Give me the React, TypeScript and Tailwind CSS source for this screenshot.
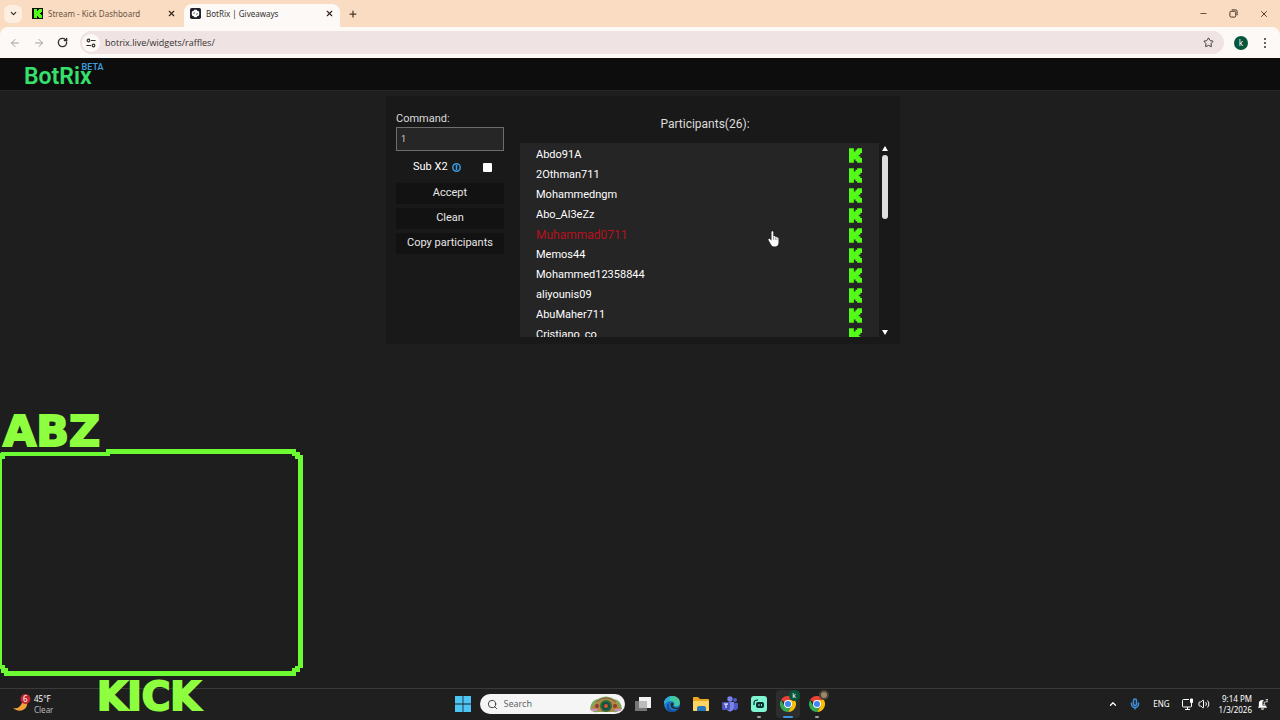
import { ChevronDown, X, Plus, ArrowLeft, ArrowRight, RotateCw, Star, Minus, Search, ChevronUp, Mic, Volume2 } from "lucide-react";
import type { ReactNode } from "react";

const participants = [
  "Abdo91A",
  "2Othman711",
  "Mohammedngm",
  "Abo_Al3eZz",
  "Muhammad0711",
  "Memos44",
  "Mohammed12358844",
  "aliyounis09",
  "AbuMaher711",
  "Cristiano_co",
];

const WINNER = "Muhammad0711";

function KickMark({ className }: { className?: string }) {
  return (
    <svg viewBox="0 0 8 9" className={className} fill="#53fc18" aria-hidden="true">
      <path d="M0 0h3v2h1V1h1V0h3v3H7v1H6v1h1v1h1v3H5V8H4V7H3v2H0z" />
    </svg>
  );
}

function BotrixMark({ className }: { className?: string }) {
  return (
    <svg viewBox="0 0 20 20" className={className} aria-hidden="true">
      <rect width="20" height="20" rx="3" fill="#20202c" />
      <path d="M8 3h4l1 2 3 1 1 4-1 4-3 1-1 2H8l-1-2-3-1-1-4 1-4 3-1z" fill="#fff" />
      <path d="M7 11V9l2-2M13 9v2l-2 2" fill="none" stroke="#20202c" strokeWidth="1.200" />
    </svg>
  );
}

function ChromeMark() {
  return (
    <svg viewBox="0 0 24 24" className="size-4" aria-hidden="true">
      <path d="M12 12L1.600 6A12 12 0 0 1 22.400 6z" fill="#e94235" />
      <path d="M12 6h10.400A12 12 0 0 1 12 24l5.200-9z" fill="#fbbc04" />
      <path d="M12 24A12 12 0 0 1 1.600 6l5.200 9 5.200 3 5.200-3z" fill="#34a853" />
      <circle cx="12" cy="12" r="6" fill="#fff" />
      <circle cx="12" cy="12" r="4.600" fill="#4285f4" />
    </svg>
  );
}

function Tab({ title, icon, active }: { title: string; icon: ReactNode; active?: boolean }) {
  return (
    <div
      className={
        active
          ? "flex h-[23px] w-[156px] items-center gap-[5px] self-end rounded-t-lg bg-[#fdf9f7] px-[6px] pb-1 text-[#33302e]"
          : "flex h-[23px] w-[156px] items-center gap-[5px] self-end px-[6px] pb-1 text-[#6b5546]"
      }
    >
      {icon}
      <span className="flex-1 truncate text-[8px]">{title}</span>
      <button type="button" aria-label={`Close ${title}`}>
        <X className="size-[9px] text-[#33241a]" strokeWidth={3} />
      </button>
    </div>
  );
}

function BrowserChrome() {
  return (
    <div className="bg-[#f9dcc1] font-['Noto_Sans',sans-serif]">
      <div className="flex h-[27px] items-center gap-[2px]">
        <button type="button" aria-label="Search tabs" className="mr-[2px] ml-1 grid size-[18px] place-items-center rounded-md bg-[#fdeee2] text-[#33241a]">
          <ChevronDown className="size-[9px]" strokeWidth={3} />
        </button>
        <Tab
          title="Stream - Kick Dashboard"
          icon={
            <span className="grid size-[11px] place-items-center bg-[#0a1207]">
              <KickMark className="h-[9px] w-2" />
            </span>
          }
        />
        <Tab active title="BotRix | Giveaways" icon={<BotrixMark className="size-[11px]" />} />
        <button type="button" aria-label="New tab" className="ml-[6px] text-[#4a382b]">
          <Plus className="size-[10px]" strokeWidth={3} />
        </button>
        <div className="ml-auto flex items-center gap-[21px] pr-[11px] text-[#33241a]">
          <button type="button" aria-label="Minimize">
            <Minus className="size-[9px]" />
          </button>
          <button type="button" aria-label="Restore">
            <svg viewBox="0 0 10 10" className="size-[9px]" fill="none" stroke="currentColor">
              <rect x="1" y="2.500" width="6.500" height="6.500" rx="1.500" />
              <path d="M3 1h4.500Q9 1 9 2.500V7" />
            </svg>
          </button>
          <button type="button" aria-label="Close window">
            <X className="size-[10px]" />
          </button>
        </div>
      </div>
      <div className="flex h-[31px] items-center rounded-t-lg bg-[#fdf9f7] pr-[9px] pl-[9px] text-[#33302e]">
        <div className="flex items-center gap-3">
          <button type="button" aria-label="Back" className="text-[#a59e9b]">
            <ArrowLeft className="size-3" />
          </button>
          <button type="button" aria-label="Forward" className="text-[#a59e9b]">
            <ArrowRight className="size-3" />
          </button>
          <button type="button" aria-label="Reload">
            <RotateCw className="size-[11px]" strokeWidth={3} />
          </button>
        </div>
        <div className="ml-3 flex h-[23px] flex-1 items-center rounded-full bg-[#efe3e3] pr-[10px] pl-[2px]">
          <button type="button" aria-label="Site information" className="grid size-[18px] place-items-center rounded-full bg-[#fdf9f7]">
            <svg viewBox="0 0 12 12" className="size-[10px]" fill="none" stroke="currentColor" strokeWidth="1.400">
              <circle cx="3" cy="3" r="1.600" />
              <path d="M6 3h5.500M.5 9H6" />
              <circle cx="9" cy="9" r="1.600" />
            </svg>
          </button>
          <input
            aria-label="Address"
            defaultValue="botrix.live/widgets/raffles/"
            className="ml-[5px] flex-1 bg-transparent font-['Open_Sans',sans-serif] text-[9px] outline-none"
          />
          <button type="button" aria-label="Bookmark this page">
            <Star className="size-[11px]" />
          </button>
        </div>
        <button type="button" aria-label="Profile" className="mr-[11px] ml-[10px] grid size-[14px] place-items-center rounded-full bg-[#06563c] text-[8px] leading-none text-white">
          k
        </button>
        <button type="button" aria-label="Menu" className="grid w-3 justify-center gap-[2px]">
          <i className="size-[2px] rounded-full bg-current" />
          <i className="size-[2px] rounded-full bg-current" />
          <i className="size-[2px] rounded-full bg-current" />
        </button>
      </div>
    </div>
  );
}

function ActionButton({ children }: { children: ReactNode }) {
  return (
    <button type="button" className="h-[21px] w-full bg-[#121212] text-[11px] text-[#e6e6e6]">
      {children}
    </button>
  );
}

function Raffle() {
  return (
    <section className="mx-auto mt-[5px] flex h-[248px] w-[514px] gap-4 bg-[#191919] px-[10px] text-white">
      <form className="w-[108px] pt-[15px]">
        <label htmlFor="command" className="block text-[11px] leading-4 text-[#dcdcdc]">
          Command:
        </label>
        <input
          id="command"
          defaultValue="1"
          className="block h-6 w-full border border-[#6d6d6d] bg-[#262626] px-1 text-[9px] text-[#d0d0d0] outline-none"
        />
        <div className="flex h-8 items-center pl-[17px] text-[11px]">
          <label htmlFor="sub">Sub X2</label>
          <svg viewBox="0 0 9 9" className="ml-1 size-[9px]" fill="none" stroke="#3a9be0" aria-hidden="true">
            <circle cx="4.500" cy="4.500" r="3.700" strokeWidth="1.500" />
            <path d="M4.500 2v5" strokeWidth="1.500" />
          </svg>
          <input id="sub" type="checkbox" className="ml-[22px] size-[9px] appearance-none rounded-[1px] bg-white" />
        </div>
        <div className="grid gap-1">
          <ActionButton>Accept</ActionButton>
          <ActionButton>Clean</ActionButton>
          <ActionButton>Copy participants</ActionButton>
        </div>
      </form>
      <div className="min-w-0 flex-1">
        <h2 className="mt-5 h-[27px] text-center text-[12px] leading-4 text-[#dcdcdc]">Participants(26):</h2>
        <div className="flex h-[194px]">
          <ul className="flex-1 overflow-hidden bg-[#252525] pt-[2px]">
            {participants.map((name) => (
              <li key={name} className="flex h-5 items-center justify-between pr-[17px] pl-4">
                <span className={name === WINNER ? "text-[12px] text-[#b5121f]" : "text-[11px]"}>{name}</span>
                <KickMark className="h-[15px] w-[13px]" />
              </li>
            ))}
          </ul>
          <div className="flex w-[11px] flex-col items-center pt-[3px] pb-[2px]">
            <i className="border-x-[3px] border-b-[5px] border-x-transparent border-b-white" />
            <i className="mt-1 h-16 w-[6px] rounded-full bg-[#dedede]" />
            <i className="mt-auto border-x-[3px] border-t-[5px] border-x-transparent border-t-white" />
          </div>
        </div>
      </div>
    </section>
  );
}

function WebcamFrame() {
  return (
    <div className="absolute bottom-0 left-0 h-[312px] w-[304px] font-['DejaVu_Sans',sans-serif] leading-none font-bold text-[#8dff3e]">
      <span className="absolute top-[2px] left-[3px] text-[43px] [-webkit-text-stroke:2px_#8dff3e]">ABZ</span>
      <svg viewBox="0 0 304 228" className="absolute top-10 left-0 h-[228px] w-[304px]" fill="#6dfb33" fillRule="evenodd" shapeRendering="crispEdges" aria-hidden="true">
        <path d="M106 1H296V4H300V7H303V220H300V224H296V228H4V225H1V221H0V5H1V4H106ZM110 6V8H5V11H2V217H5V220H8V223H292V220H295V218H298V11H295V8H292V6Z" />
      </svg>
      <span className="absolute bottom-1 left-[97px] text-[39px] [-webkit-text-stroke:2px_#8dff3e]">KICK</span>
    </div>
  );
}

function HandCursor() {
  return (
    <svg viewBox="0 0 12 16" className="absolute top-[231px] left-[768px] h-4 w-3" aria-hidden="true">
      <path d="M3.500 1.200c0-1.300 1.800-1.300 1.800 0v4.600l.5-.5c.7-.5 1.300 0 1.400.7.600-.6 1.500-.3 1.600.6.700-.5 1.700-.1 1.700.9v4.300c0 2.200-1.300 3.700-3.400 3.700H6c-1.500 0-2.400-.8-3-2L.6 9.300c-.7-1.200.7-2 1.500-1.100l1.400 1.500z" fill="#fff" />
      <path d="M5.500 5.800v3M7.300 6.500v2.300M9 7.200v2" stroke="#333" strokeWidth=".5" />
    </svg>
  );
}

function AppIcon({ label, mark, children }: { label: string; mark?: "idle" | "active"; children: ReactNode }) {
  return (
    <button
      type="button"
      aria-label={label}
      className={mark === "active" ? "relative grid h-7 w-6 place-items-center rounded bg-[#2d2d2d]" : "relative grid h-7 w-6 place-items-center"}
    >
      {children}
      {mark === "active" && <i className="absolute bottom-0 h-[2px] w-[10px] rounded-full bg-[#3d93dc]" />}
      {mark === "idle" && <i className="absolute bottom-0 h-[2px] w-1 rounded-full bg-[#a0a0a0]" />}
    </button>
  );
}

function Taskbar() {
  return (
    <footer className="flex h-8 items-center border-t border-[#3a3a3a] bg-[#1f1f20] pb-px font-['Noto_Sans',sans-serif] text-[8px] text-white">
      <div className="flex flex-1 items-center gap-[2px] pl-3">
        <div className="relative h-5 w-5">
          <svg viewBox="0 0 20 20" className="size-5" aria-hidden="true">
            <path d="M15 7c2 8-7 13-14 7 5 1 7-1 9-5z" fill="#f5a13a" />
            <circle cx="13.500" cy="5" r="5" fill="#c4262e" />
          </svg>
          <span className="absolute top-0 left-[11px] leading-[10px]">6</span>
        </div>
        <div className="leading-[11px]">
          <div>45°F</div>
          <div className="text-[#b9b9b9]">Clear</div>
        </div>
      </div>
      <nav className="flex items-center gap-[9px] pl-[3px]">
        <button type="button" aria-label="Start">
          <svg viewBox="0 0 16 16" className="size-4" fill="#4cc5f5">
            <path d="M0 0h7.600v7.600H0zM8.400 0H16v7.600H8.400zM0 8.400h7.600V16H0zM8.400 8.400H16V16H8.400z" />
          </svg>
        </button>
        <label className="flex h-5 w-[145px] items-center rounded-full bg-[#f5f5f5] pr-[2px] pl-[7px] text-[#333]">
          <Search className="size-[11px] shrink-0" />
          <input aria-label="Search" placeholder="Search" className="ml-[6px] min-w-0 flex-1 bg-transparent text-[9px] outline-none placeholder:text-[#666]" />
          <svg viewBox="0 0 34 18" className="h-[18px] w-[34px] shrink-0" aria-hidden="true">
            <path d="M1 14Q2 5 9 4 17-1 25 4q7 1 8 10-4 4-8 3H9q-5 1-8-3z" fill="#7fa65a" />
            <path d="M3 13Q8 5 17 4t14 9q-6 4-14 4T3 13z" fill="#b98544" />
            <path d="M7 7Q17-1 27 7" fill="none" stroke="#8a5a3a" />
            <circle cx="17" cy="11" r="6" fill="#2d6b3c" />
            <circle cx="17" cy="11" r="4" fill="#174f43" />
            <circle cx="17" cy="11" r="2" fill="#d2582e" />
            <circle cx="8" cy="11" r="2" fill="#8b3f30" />
            <circle cx="26" cy="11" r="2" fill="#8b3f30" />
            <path d="M2 15h6M26 15h6" stroke="#ce8ccc" strokeWidth="2" />
          </svg>
        </label>
      </nav>
      <nav className="flex items-center gap-[5px] pl-[6px]">
        <AppIcon label="Task view">
          <svg viewBox="0 0 16 16" className="size-4">
            <path d="M4 1h12v11H4z" fill="#f2f2f2" />
            <path d="M0 5h12v10H0z" fill="#777" />
            <path d="M4 5h8v7H4z" fill="#bbb" />
          </svg>
        </AppIcon>
        <AppIcon label="Edge">
          <svg viewBox="0 0 16 16" className="size-4">
            <circle cx="8" cy="8" r="8" fill="#1c7fd0" />
            <path d="M0 8C0-2 16-3 16 7c0 4-6 4-6 2 1-2 0-4-3-4-4 0-6 2-7 3z" fill="#43c9a0" />
            <path d="M0 8C0 3 4 0 8 0 5 2 5 4 7 5 4 4 1 6 0 8z" fill="#2aa9dc" />
            <path d="M5 8c-1 5 4 8 9 5-2 3-6 4-9 2-4-2-3-8 2-9-1 1-2 1-2 2z" fill="#164e9c" />
            <path d="M7 7c3-1 3 1 2 3 1 2 4 2 6 1l-1 2C9 14 5 11 7 7z" fill="#202020" opacity=".85" />
          </svg>
        </AppIcon>
        <AppIcon label="File Explorer">
          <svg viewBox="0 0 16 16" className="size-4">
            <path d="M0 2q0-1 1-1h4l2 2h8q1 0 1 1v10q0 1-1 1H1q-1 0-1-1z" fill="#e9a820" />
            <path d="M0 5h16v9q0 1-1 1H1q-1 0-1-1z" fill="#fcd462" />
            <path d="M4 15v-3q0-2 2-2h5q2 0 2 2v3z" fill="#2477bd" />
          </svg>
        </AppIcon>
        <AppIcon label="Teams">
          <svg viewBox="0 0 16 16" className="size-4">
            <circle cx="8" cy="3" r="2.700" fill="#7b83eb" />
            <circle cx="13" cy="4" r="2" fill="#5059c9" />
            <path d="M5 6h7v6a4 4 0 0 1-7 2z" fill="#7b83eb" />
            <path d="M12 7h4v4a3 3 0 0 1-4 3z" fill="#5059c9" />
            <rect y="6" width="8" height="8" rx="1" fill="#4b53bc" />
            <path d="M2 8h4M4 8v4" stroke="#fff" />
          </svg>
        </AppIcon>
        <AppIcon label="Streamlabs" mark="idle">
          <svg viewBox="0 0 16 16" className="size-4">
            <rect width="16" height="16" rx="3" fill="#80f5d2" />
            <rect x="5" y="6" width="8" height="6" rx="2" fill="#092c2c" />
            <path d="M3 9V7q0-3 4-3" fill="none" stroke="#092c2c" strokeWidth="1.200" />
            <path d="M8 8v2M10.500 8v2" stroke="#80f5d2" />
          </svg>
        </AppIcon>
        <AppIcon label="Chrome" mark="active">
          <ChromeMark />
          <span className="absolute top-0 right-0 grid size-[11px] place-items-center rounded-full bg-[#06563c] text-[7px] leading-none">k</span>
        </AppIcon>
        <AppIcon label="Chrome, second profile" mark="idle">
          <ChromeMark />
          <i className="absolute top-0 right-0 size-[10px] rounded-full border-2 border-[#4a4438] bg-[#9a8967]" />
        </AppIcon>
      </nav>
      <div className="flex flex-1 items-center justify-end pr-3">
        <ChevronUp className="size-[10px]" strokeWidth={3} />
        <Mic className="ml-[11px] size-3 text-[#3b8fdb]" strokeWidth={3} />
        <span className="ml-3">ENG</span>
        <svg viewBox="0 0 12 12" className="ml-3 size-3" fill="none" stroke="currentColor" aria-hidden="true">
          <path d="M7 1.500H1.500q-1 0-1 1V8q0 1 1 1h7q1 0 1-1V7M3 11.500h5M5.500 9v2.500" />
          <path d="M8.500 1v3q0 1 1 1t1-1V1zM9.500 5v2" fill="currentColor" />
        </svg>
        <Volume2 className="ml-1 size-3" />
        <div className="ml-[9px] text-right leading-[11px]">
          <div>9:14 PM</div>
          <div>1/3/2026</div>
        </div>
        <svg viewBox="0 0 12 12" className="ml-[5px] size-[11px]" fill="currentColor" aria-hidden="true">
          <path d="M1 9.500L2 8V5q0-4 4-4 1 0 1.500.4L6 3v4h4v1l1 1.500zM4 10.300h4q-.5 1.500-2 1.500t-2-1.500z" />
          <path d="M7 3.500h2L7.200 6H9M9.500.5H12L9.700 3H12" fill="none" stroke="currentColor" strokeWidth=".8" />
        </svg>
      </div>
    </footer>
  );
}

export default function App() {
  return (
    <div className="relative flex min-h-screen flex-col overflow-hidden bg-[#1e1e1e] font-[Roboto,sans-serif]">
      <BrowserChrome />
      <header className="h-[33px] border-b border-[#292929] bg-[#0d0d0d] pl-6">
        <div className="flex items-start">
          <h1 className="pt-[7px] text-[23px] leading-6 font-semibold text-[#35e06c]">BotRix</h1>
          <sup className="-ml-[10px] pt-[7px] text-[9px] leading-3 font-semibold text-[#3e9bd8]">BETA</sup>
        </div>
      </header>
      <main className="flex-1 pl-[6px]">
        <Raffle />
      </main>
      <Taskbar />
      <WebcamFrame />
      <HandCursor />
    </div>
  );
}
